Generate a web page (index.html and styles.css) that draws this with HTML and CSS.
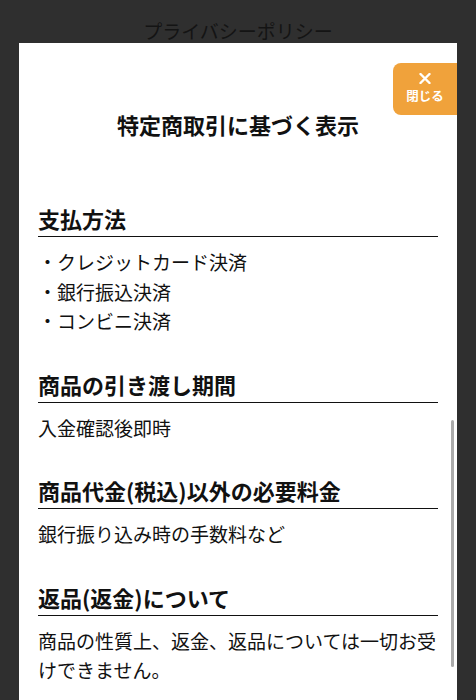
FILE: index.html
```html
<!DOCTYPE html>
<html lang="ja">
<head>
    <meta charset="UTF-8">
    <meta name="viewport" content="width=device-width, initial-scale=1.0">
    <title>特定商取引に基づく表示</title>
    <link rel="stylesheet" href="styles.css">
</head>
<body>

    <div class="page-title">プライバシーポリシー</div>

    <div class="modal">
        <button class="btn-close">
            <svg class="close-x" width="12" height="11" viewBox="0 0 12 11">
                <path d="M1.5 1 L10.5 10 M10.5 1 L1.5 10" stroke="#fff" stroke-width="2.4" stroke-linecap="round"/>
            </svg>
            <span class="close-label">閉じる</span>
        </button>

        <h1>特定商取引に基づく表示</h1>

        <div class="section">
            <h2>支払方法</h2>
            <ul class="pay-list">
                <li>・クレジットカード決済</li>
                <li>・銀行振込決済</li>
                <li>・コンビニ決済</li>
            </ul>
        </div>

        <div class="section">
            <h2>商品の引き渡し期間</h2>
            <p>入金確認後即時</p>
        </div>

        <div class="section">
            <h2>商品代金(税込)以外の必要料金</h2>
            <p>銀行振り込み時の手数料など</p>
        </div>

        <div class="section">
            <h2>返品(返金)について</h2>
            <p>商品の性質上、返金、返品については一切お受けできません。</p>
        </div>

        <!-- scrollbar thumb -->
        <div class="scroll-thumb"></div>
    </div>

</body>
</html>
```

FILE: styles.css
```css
body {
    margin: 0;
    height: 700px;
    overflow: hidden;
    background-color: #2f2f2f;
    font-family: "Noto Sans CJK JP", "Noto Sans", sans-serif;
    color: #111;
}
.page-title {
    height: 43px;
    box-sizing: border-box;
    padding-top: 19px;
    line-height: 24px;
    font-size: 19px;
    text-align: center;
    color: #141414;
}
.modal {
    position: relative;
    margin: 0 19px;
    height: 657px;
    box-sizing: border-box;
    overflow: hidden;
    background-color: #fff;
    padding: 66px 19px 0;
}
.btn-close {
    position: absolute;
    top: 20px;
    right: 0;
    width: 64px;
    height: 52px;
    border: none;
    border-radius: 8px 0 0 8px;
    background-color: #f0a23b;
    color: #fff;
    font-family: inherit;
    font-weight: bold;
    display: flex;
    flex-direction: column;
    align-items: center;
    justify-content: center;
    gap: 4px;
    padding: 0 0 2px;
    cursor: pointer;
}
.close-x {
    display: block;
}
.close-label {
    font-size: 12.5px;
    line-height: 15px;
}
h1 {
    margin: 0 0 63px;
    font-size: 22px;
    line-height: 31px;
    text-align: center;
    font-weight: bold;
}
.section {
    margin-bottom: 33px;
}
h2 {
    margin: 0 0 10px;
    padding-bottom: 2px;
    font-size: 22px;
    line-height: 31px;
    font-weight: bold;
    border-bottom: 1.5px solid #111;
}
.section p, .pay-list {
    margin: 0;
    padding: 0;
    font-size: 19px;
    line-height: 29.5px;
}
.pay-list {
    list-style: none;
}
.scroll-thumb {
    position: absolute;
    top: 377px;
    right: 3px;
    width: 3px;
    height: 247px;
    border-radius: 2px;
    background-color: #ababab;
}
```
